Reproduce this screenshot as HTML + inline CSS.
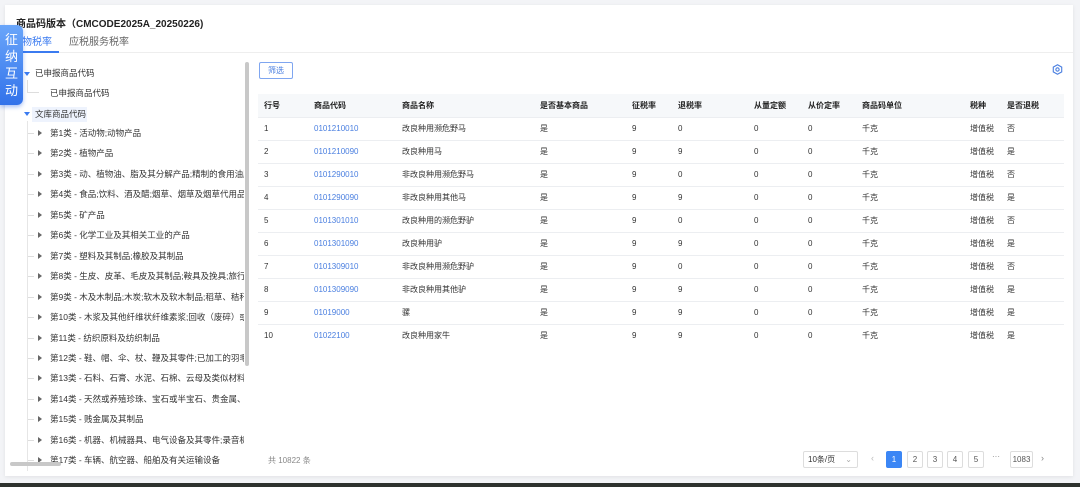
<!DOCTYPE html>
<html><head><meta charset="utf-8"><style>
*{margin:0;padding:0;box-sizing:border-box}
body{width:1080px;height:487px;background:#f3f4f7;font-family:"Liberation Sans","Noto Sans CJK SC",sans-serif;position:relative;overflow:hidden;color:#333}
.card{position:absolute;left:5px;top:5px;width:1068px;height:471px;background:#fff;box-shadow:0 1px 4px rgba(0,0,0,.08)}
.abs{position:absolute;white-space:nowrap}
.title{left:16px;top:15px;font-size:10px;font-weight:bold;color:#222}
.tab{top:33px;font-size:10px}
.badge{position:absolute;left:0;top:25px;width:23px;height:80px;background:linear-gradient(180deg,#6aa6fa,#3272ea);border-radius:0 6px 6px 0;color:#fff;font-size:13px;line-height:17px;text-align:center;padding-top:6px;box-shadow:0 2px 4px rgba(40,100,230,.4)}
.tr{position:absolute;font-size:8.5px;color:#333;white-space:nowrap}
.arr{position:absolute;width:0;height:0;border-top:3px solid transparent;border-bottom:3px solid transparent;border-left:4px solid #666}
.dash{position:absolute;height:1px;width:6px;background:#ddd}
table{position:absolute;left:258px;top:94px;width:806px;border-collapse:collapse;font-size:8px}
th{background:#f6f8fa;height:23px;text-align:left;font-weight:bold;color:#222;padding:0}
td{height:23px;border-top:1px solid #eceef1;padding:0;color:#333}
td.c{color:#4a7fe0}
.pg{position:absolute;top:451px;height:17px;border:1px solid #ddd;font-size:8px;text-align:center;line-height:15px;color:#555;border-radius:2px;background:#fff}
</style></head><body>
<div class="card"></div>
<div class="abs title">商品码版本（CMCODE2025A_20250226)</div>
<div class="abs tab" style="left:22px;color:#3b7bf0">物税率</div>
<div class="abs tab" style="left:69px;color:#666">应税服务税率</div>
<div class="abs" style="left:5px;top:52px;width:1068px;height:1px;background:#eee"></div>
<div class="abs" style="left:20px;top:51px;width:39px;height:2px;background:#3b7bf0"></div>
<div class="badge">征<br>纳<br>互<br>动</div>

<div style="position:absolute;left:24px;top:72px;width:0;height:0;border-left:3px solid transparent;border-right:3px solid transparent;border-top:4px solid #3b7bf0"></div>
<div class="tr" style="left:35px;top:67px">已申报商品代码</div>
<div class="abs" style="left:27px;top:80px;width:1px;height:12px;background:#ddd"></div>
<div class="dash" style="left:27px;top:92px;width:12px"></div>
<div class="tr" style="left:50px;top:87px">已申报商品代码</div>
<div style="position:absolute;left:24px;top:112px;width:0;height:0;border-left:3px solid transparent;border-right:3px solid transparent;border-top:4px solid #3b7bf0"></div>
<div class="abs" style="left:32px;top:107px;width:55px;height:15px;background:#eef3fd"></div>
<div class="tr" style="left:35px;top:108px">文库商品代码</div>
<div class="abs" style="left:27px;top:121px;width:1px;height:350px;background:#e6e6e6"></div>
<div id="tree"></div>
<div class="abs" style="left:245px;top:62px;width:4px;height:304px;background:#c8c8c8;border-radius:2px"></div>
<div class="abs" style="left:10px;top:462px;width:51px;height:4px;background:#c8c8c8;border-radius:2px"></div>

<div class="abs" style="left:259px;top:62px;width:34px;height:17px;border:1px solid #7fa6f0;border-radius:2px;font-size:8px;color:#4a7fe0;text-align:center;line-height:15px">筛选</div>
<svg class="abs" style="left:1052px;top:64px" width="11" height="11" viewBox="0 0 12 12"><path d="M6 .8 10.6 3.4v5.2L6 11.2 1.4 8.6V3.4z" fill="none" stroke="#4a7fe0" stroke-width="1.2"/><circle cx="6" cy="6" r="1.8" fill="none" stroke="#4a7fe0" stroke-width="1.2"/></svg>

<table>
<colgroup><col style="width:56px"><col style="width:88px"><col style="width:138px"><col style="width:92px"><col style="width:46px"><col style="width:76px"><col style="width:54px"><col style="width:54px"><col style="width:108px"><col style="width:37px"><col></colgroup>
<tr><th style="padding-left:6px">行号</th><th>商品代码</th><th>商品名称</th><th>是否基本商品</th><th>征税率</th><th>退税率</th><th>从量定额</th><th>从价定率</th><th>商品码单位</th><th>税种</th><th>是否退税</th></tr>
<tbody id="tb"></tbody>
</table>

<div class="abs" style="left:268px;top:455px;font-size:8px;color:#888">共 10822 条</div>
<div class="pg" style="left:803px;width:55px;text-align:left;padding-left:4px;color:#333">10条/页<span style="position:absolute;right:5px;color:#aaa">⌄</span></div>
<div class="abs" style="left:871px;top:453px;font-size:9px;color:#bbb">‹</div>
<div class="pg" style="left:886px;width:16px;background:#3b86f5;border-color:#3b86f5;color:#fff">1</div>
<div class="pg" style="left:907px;width:16px">2</div>
<div class="pg" style="left:927px;width:16px">3</div>
<div class="pg" style="left:947px;width:16px">4</div>
<div class="pg" style="left:968px;width:16px">5</div>
<div class="abs" style="left:992px;top:452px;font-size:8px;color:#888">···</div>
<div class="pg" style="left:1010px;width:23px">1083</div>
<div class="abs" style="left:1041px;top:453px;font-size:9px;color:#888">›</div>
<div class="abs" style="left:0;top:483px;width:1080px;height:4px;background:#2e322e"></div>

<script>
var cats=["第1类 - 活动物;动物产品","第2类 - 植物产品","第3类 - 动、植物油、脂及其分解产品;精制的食用油脂","第4类 - 食品;饮料、酒及醋;烟草、烟草及烟草代用品","第5类 - 矿产品","第6类 - 化学工业及其相关工业的产品","第7类 - 塑料及其制品;橡胶及其制品","第8类 - 生皮、皮革、毛皮及其制品;鞍具及挽具;旅行","第9类 - 木及木制品;木炭;软木及软木制品;稻草、秸秆","第10类 - 木浆及其他纤维状纤维素浆;回收（废碎）或","第11类 - 纺织原料及纺织制品","第12类 - 鞋、帽、伞、杖、鞭及其零件;已加工的羽毛","第13类 - 石料、石膏、水泥、石棉、云母及类似材料","第14类 - 天然或养殖珍珠、宝石或半宝石、贵金属、","第15类 - 贱金属及其制品","第16类 - 机器、机械器具、电气设备及其零件;录音机","第17类 - 车辆、航空器、船舶及有关运输设备"];
var h="";cats.forEach(function(c,i){var y=127+i*20.45;
h+='<div class="dash" style="left:28px;top:'+(y+6)+'px"></div><div class="arr" style="left:38px;top:'+(y+3)+'px"></div><div class="tr" style="left:50px;top:'+(y)+'px;max-width:194px;overflow:hidden">'+c+'</div>';});
document.getElementById("tree").innerHTML=h;
var rows=[["0101210010","改良种用濒危野马","是","9","0","否"],["0101210090","改良种用马","是","9","9","是"],["0101290010","非改良种用濒危野马","是","9","0","否"],["0101290090","非改良种用其他马","是","9","9","是"],["0101301010","改良种用的濒危野驴","是","9","0","否"],["0101301090","改良种用驴","是","9","9","是"],["0101309010","非改良种用濒危野驴","是","9","0","否"],["0101309090","非改良种用其他驴","是","9","9","是"],["01019000","骡","是","9","9","是"],["01022100","改良种用家牛","是","9","9","是"]];
var t="";rows.forEach(function(r,i){t+='<tr><td style="padding-left:6px">'+(i+1)+'</td><td class="c">'+r[0]+'</td><td>'+r[1]+'</td><td>'+r[2]+'</td><td>'+r[3]+'</td><td>'+r[4]+'</td><td>0</td><td>0</td><td>千克</td><td>增值税</td><td>'+r[5]+'</td></tr>';});
document.getElementById("tb").innerHTML=t;
</script>
</body></html>
